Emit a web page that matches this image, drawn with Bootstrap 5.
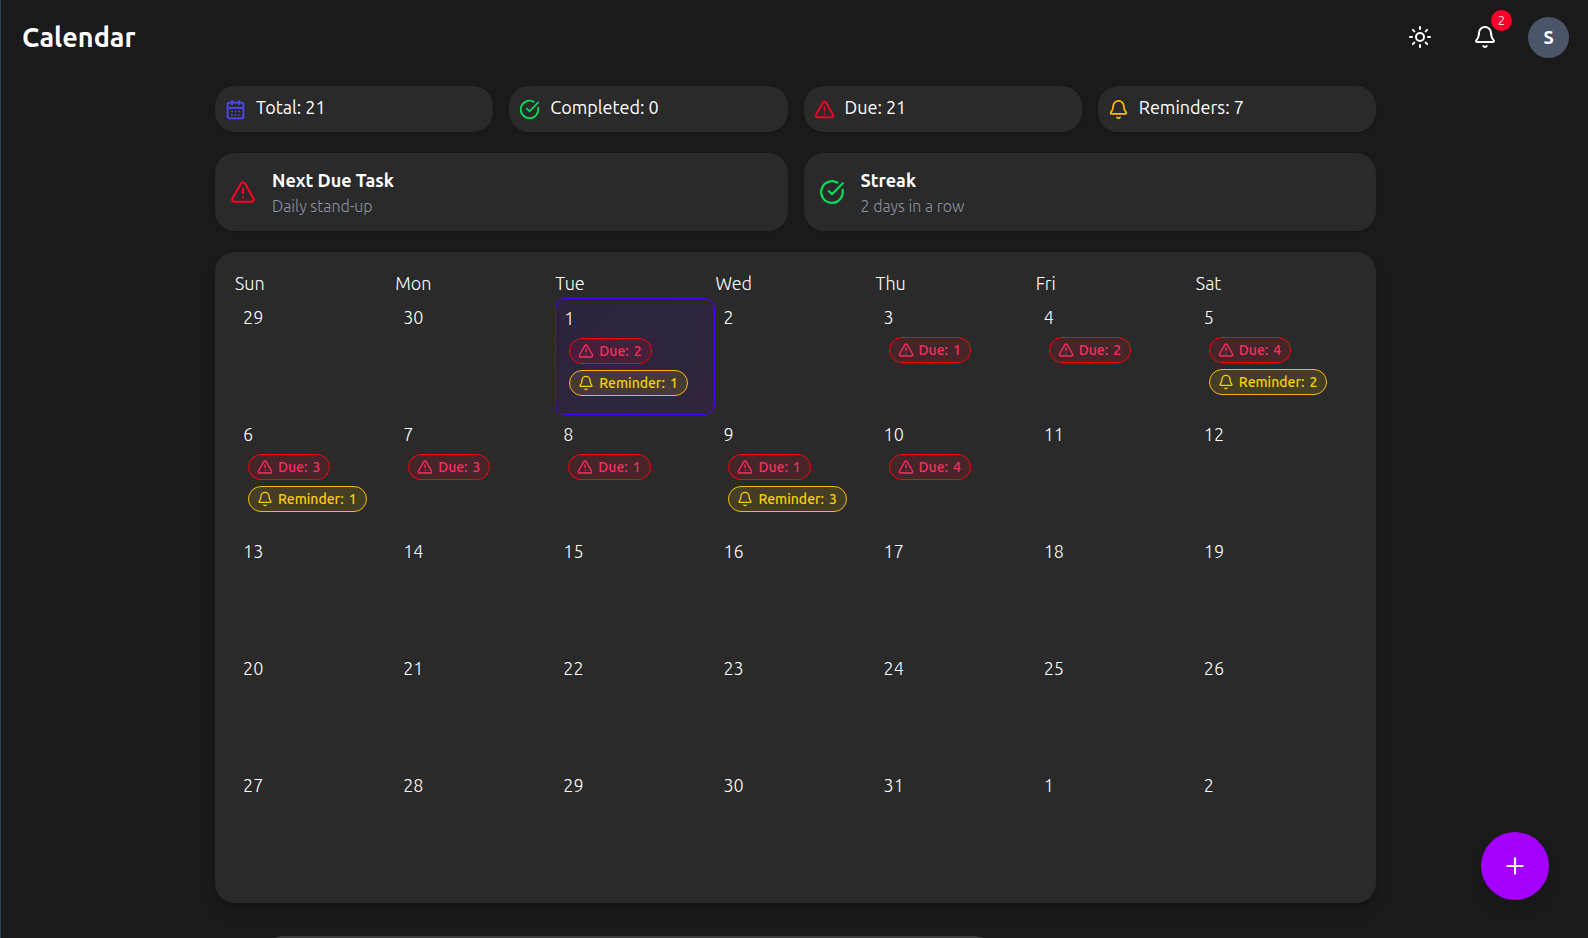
<!DOCTYPE html>
<html lang="en" data-bs-theme="dark">
<head>
<meta charset="utf-8">
<meta name="viewport" content="width=device-width, initial-scale=1">
<title>Calendar</title>
<link href="https://cdn.jsdelivr.net/npm/bootstrap@5.3.0/dist/css/bootstrap.min.css" rel="stylesheet">
<style>
  :root { --surface: #2a2a2a; --violet: #4f00ff; }
  body {
    background: #1a1a1a; color: #fff; border-left: 1px solid #314158;
    font-family: Ubuntu, "Noto Sans", sans-serif; font-size: 18px; line-height: 22px;
  }
  .ico { width: 21px; height: 21px; flex: none; fill: none; stroke: currentColor; stroke-width: 2; stroke-linecap: round; stroke-linejoin: round; }
  .ico-lg { width: 26px; height: 26px; }
  .ico-sm { width: 16px; height: 16px; }
  .page-head { height: 74px; padding: 0 19px 0 21px; }
  .page-title { font-size: 27px; line-height: 32px; font-weight: 600; }
  .head-actions { gap: 21px; }
  .icon-btn { width: 44px; height: 44px; color: #fff; border: 0; background: none; }
  .icon-btn .ico { width: 24px; height: 24px; }
  .count { top: -5px; right: -5px; width: 21px; height: 21px; font-size: 13px; line-height: 20px; font-weight: 300; background: #ff0028; }
  .avatar { width: 41px; height: 41px; border: 0; background: #4a5568; font-size: 18px; font-weight: 600; line-height: 26px; }
  .content { max-width: 1161px; margin-top: 12px; }
  .content-wrap { padding-left: 2px; }
  .stack { gap: 21px; }
  .panel { background: var(--surface); border-radius: 20px; box-shadow: 0 1px 3px rgba(0,0,0,.15); }
  .stat { padding: 10px; gap: 10px; font-weight: 400; }
  .stat-label { padding-bottom: 4px; }
  .info { padding: 14px 15px; gap: 16px; }
  .info-title { font-size: 18px; line-height: 26px; font-weight: 600; margin-bottom: 2px; }
  .info-text { font-size: 16px; line-height: 22px; font-weight: 300; color: #8d94a3; }
  .c-indigo { color: #4f46ff; } .c-green { color: #00e05a; } .c-red { color: #ff0028; } .c-amber { color: #ffb900; }
  .month-card { padding: 20px; box-shadow: 0 10px 15px -3px rgba(0,0,0,.2), 0 4px 6px -4px rgba(0,0,0,.2); }
  .month { table-layout: fixed; border-collapse: separate; border-spacing: 0; font-weight: 300; }
  .month th { font-weight: 300; padding: 0; height: 26px; vertical-align: top; }
  .month td { height: 117px; padding: 8px; vertical-align: top; }
  .month .today { border: 1px solid var(--violet); border-radius: 10px; background: linear-gradient(135deg, #2c233c, #2f263e); }
  .tags { gap: 6px; margin: 9px 0 0 5px; }
  .tag { gap: 5px; padding: 0 9px 0 8px; border: 1px solid; border-radius: 13px; font-size: 14px; line-height: 24px; font-weight: 500; }
  .tag-due { color: #ff2d5f; border-color: #fb0004; background: rgba(255,0,50,.13); }
  .tag-rem { color: #fdd000; border-color: #fdb900; background: rgba(255,215,0,.12); }
  .next-panel { width: 732px; max-width: 64%; height: 120px; margin: 12px 0 0 48px; background: #3d3d3d; border-radius: 20px; }
  .fab { right: 39px; bottom: 38px; width: 68px; height: 68px; border: 0; background: #a400ff; color: #fff; box-shadow: 0 10px 15px -3px rgba(0,0,0,.15); }
</style>
</head>
<body class="vh-100 overflow-hidden">
<svg class="d-none" xmlns="http://www.w3.org/2000/svg">
  <symbol id="i-alert" viewBox="0 0 24 24"><path d="m21.73 18-8-14a2 2 0 0 0-3.48 0l-8 14A2 2 0 0 0 4 21h16a2 2 0 0 0 1.73-3"/><path d="M12 9v4M12 17h.01"/></symbol>
  <symbol id="i-bell" viewBox="0 0 24 24"><path d="M10.268 21a2 2 0 0 0 3.464 0"/><path d="M3.262 15.326A1 1 0 0 0 4 17h16a1 1 0 0 0 .74-1.673C19.41 13.956 18 12.499 18 8A6 6 0 0 0 6 8c0 4.499-1.411 5.956-2.738 7.326"/></symbol>
  <symbol id="i-check" viewBox="0 0 24 24"><path d="M21.801 10A10 10 0 1 1 17 3.335"/><path d="m9 11 3 3L22 4"/></symbol>
  <symbol id="i-cal" viewBox="0 0 24 24"><path d="M8 2v4M16 2v4M3 10h18"/><rect width="18" height="18" x="3" y="4" rx="2"/><path d="M8 14h.01M12 14h.01M16 14h.01M8 18h.01M12 18h.01M16 18h.01"/></symbol>
  <symbol id="i-sun" viewBox="0 0 24 24"><circle cx="12" cy="12" r="4"/><path d="M12 2v2M12 20v2m-7.07-17.07 1.41 1.41M17.66 17.66l1.41 1.41M2 12h2M20 12h2M6.34 17.66l-1.41 1.41M19.07 4.93l-1.41 1.41"/></symbol>
  <symbol id="i-plus" viewBox="0 0 24 24"><path d="M5 12h14M12 5v14"/></symbol>
</svg>

<header class="page-head d-flex align-items-center justify-content-between">
  <h1 class="page-title mb-0">Calendar</h1>
  <div class="head-actions d-flex align-items-center">
    <button type="button" class="icon-btn d-flex align-items-center justify-content-center p-0" aria-label="Toggle theme"><svg class="ico"><use href="#i-sun"/></svg></button>
    <button type="button" class="icon-btn position-relative d-flex align-items-center justify-content-center p-0" aria-label="Notifications"><svg class="ico"><use href="#i-bell"/></svg><span class="count position-absolute rounded-circle text-center">2</span></button>
    <button type="button" class="avatar rounded-circle text-white p-0">S</button>
  </div>
</header>

<main class="content-wrap">
  <div class="content stack mx-auto d-flex flex-column">
    <section class="row row-cols-2 row-cols-lg-4 gx-3 gy-3 mt-0">
      <div class="col mt-0"><div class="panel stat d-flex align-items-center"><svg class="ico c-indigo"><use href="#i-cal"/></svg><span class="stat-label">Total: 21</span></div></div>
      <div class="col mt-0"><div class="panel stat d-flex align-items-center"><svg class="ico c-green"><use href="#i-check"/></svg><span class="stat-label">Completed: 0</span></div></div>
      <div class="col mt-0"><div class="panel stat d-flex align-items-center"><svg class="ico c-red"><use href="#i-alert"/></svg><span class="stat-label">Due: 21</span></div></div>
      <div class="col mt-0"><div class="panel stat d-flex align-items-center"><svg class="ico c-amber"><use href="#i-bell"/></svg><span class="stat-label">Reminders: 7</span></div></div>
    </section>

    <section class="row gx-3">
      <div class="col-6"><div class="panel info d-flex align-items-center"><svg class="ico ico-lg c-red"><use href="#i-alert"/></svg><div><h2 class="info-title">Next Due Task</h2><p class="info-text mb-0">Daily stand-up</p></div></div></div>
      <div class="col-6"><div class="panel info d-flex align-items-center"><svg class="ico ico-lg c-green"><use href="#i-check"/></svg><div><h2 class="info-title">Streak</h2><p class="info-text mb-0">2 days in a row</p></div></div></div>
    </section>

    <section class="panel month-card">
      <table class="month w-100">
        <thead><tr><th scope="col">Sun</th><th scope="col">Mon</th><th scope="col">Tue</th><th scope="col">Wed</th><th scope="col">Thu</th><th scope="col">Fri</th><th scope="col">Sat</th></tr></thead>
        <tbody>
          <tr>
            <td>29</td>
            <td>30</td>
            <td class="today">1<div class="tags d-flex flex-column align-items-start"><span class="tag tag-due d-flex align-items-center"><svg class="ico ico-sm"><use href="#i-alert"/></svg><span>Due:</span> <span>2</span></span><span class="tag tag-rem d-flex align-items-center"><svg class="ico ico-sm"><use href="#i-bell"/></svg><span>Reminder:</span> <span>1</span></span></div></td>
            <td>2</td>
            <td>3<div class="tags d-flex flex-column align-items-start"><span class="tag tag-due d-flex align-items-center"><svg class="ico ico-sm"><use href="#i-alert"/></svg><span>Due:</span> <span>1</span></span></div></td>
            <td>4<div class="tags d-flex flex-column align-items-start"><span class="tag tag-due d-flex align-items-center"><svg class="ico ico-sm"><use href="#i-alert"/></svg><span>Due:</span> <span>2</span></span></div></td>
            <td>5<div class="tags d-flex flex-column align-items-start"><span class="tag tag-due d-flex align-items-center"><svg class="ico ico-sm"><use href="#i-alert"/></svg><span>Due:</span> <span>4</span></span><span class="tag tag-rem d-flex align-items-center"><svg class="ico ico-sm"><use href="#i-bell"/></svg><span>Reminder:</span> <span>2</span></span></div></td>
          </tr>
          <tr>
            <td>6<div class="tags d-flex flex-column align-items-start"><span class="tag tag-due d-flex align-items-center"><svg class="ico ico-sm"><use href="#i-alert"/></svg><span>Due:</span> <span>3</span></span><span class="tag tag-rem d-flex align-items-center"><svg class="ico ico-sm"><use href="#i-bell"/></svg><span>Reminder:</span> <span>1</span></span></div></td>
            <td>7<div class="tags d-flex flex-column align-items-start"><span class="tag tag-due d-flex align-items-center"><svg class="ico ico-sm"><use href="#i-alert"/></svg><span>Due:</span> <span>3</span></span></div></td>
            <td>8<div class="tags d-flex flex-column align-items-start"><span class="tag tag-due d-flex align-items-center"><svg class="ico ico-sm"><use href="#i-alert"/></svg><span>Due:</span> <span>1</span></span></div></td>
            <td>9<div class="tags d-flex flex-column align-items-start"><span class="tag tag-due d-flex align-items-center"><svg class="ico ico-sm"><use href="#i-alert"/></svg><span>Due:</span> <span>1</span></span><span class="tag tag-rem d-flex align-items-center"><svg class="ico ico-sm"><use href="#i-bell"/></svg><span>Reminder:</span> <span>3</span></span></div></td>
            <td>10<div class="tags d-flex flex-column align-items-start"><span class="tag tag-due d-flex align-items-center"><svg class="ico ico-sm"><use href="#i-alert"/></svg><span>Due:</span> <span>4</span></span></div></td>
            <td>11</td>
            <td>12</td>
          </tr>
          <tr><td>13</td><td>14</td><td>15</td><td>16</td><td>17</td><td>18</td><td>19</td></tr>
          <tr><td>20</td><td>21</td><td>22</td><td>23</td><td>24</td><td>25</td><td>26</td></tr>
          <tr><td>27</td><td>28</td><td>29</td><td>30</td><td>31</td><td>1</td><td>2</td></tr>
        </tbody>
      </table>
    </section>

    <section class="next-panel"></section>
  </div>
</main>

<button type="button" class="fab position-fixed rounded-circle d-flex align-items-center justify-content-center p-0" aria-label="Add task"><svg class="ico ico-lg"><use href="#i-plus"/></svg></button>
<script src="https://cdn.jsdelivr.net/npm/bootstrap@5.3.0/dist/js/bootstrap.bundle.min.js"></script>
</body>
</html>
